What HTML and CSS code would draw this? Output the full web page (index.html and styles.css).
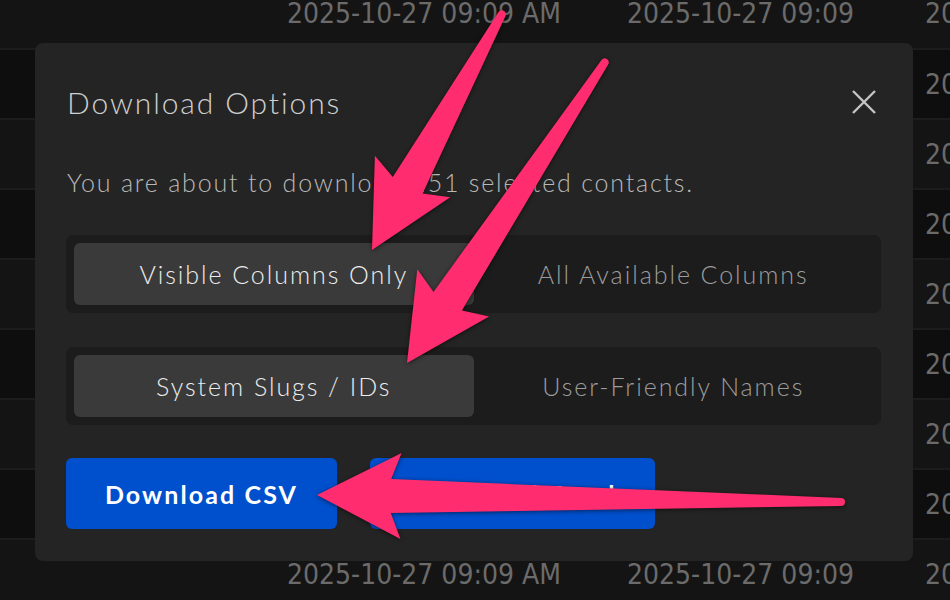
FILE: index.html
```html
<!DOCTYPE html>
<html lang="en">
<head>
    <meta charset="UTF-8">
    <meta name="viewport" content="width=device-width, initial-scale=1.0">
    <title>Contacts - Download</title>
    <link rel="stylesheet" href="styles.css">
</head>
<body>
    <!-- Таблица контактов на фоне -->
    <div class="table">
        <div class="row"><span class="cell c1">2025-10-27 09:09 AM</span><span class="cell c2">2025-10-27 09:09</span><span class="cell c3">2025-10-27</span></div>
        <div class="row dark"><span class="cell c1">2025-10-27 09:09 AM</span><span class="cell c2">2025-10-27 09:09</span><span class="cell c3">2025-10-27</span></div>
        <div class="row"><span class="cell c1">2025-10-27 09:09 AM</span><span class="cell c2">2025-10-27 09:09</span><span class="cell c3">2025-10-27</span></div>
        <div class="row dark"><span class="cell c1">2025-10-27 09:09 AM</span><span class="cell c2">2025-10-27 09:09</span><span class="cell c3">2025-10-27</span></div>
        <div class="row"><span class="cell c1">2025-10-27 09:09 AM</span><span class="cell c2">2025-10-27 09:09</span><span class="cell c3">2025-10-27</span></div>
        <div class="row dark"><span class="cell c1">2025-10-27 09:09 AM</span><span class="cell c2">2025-10-27 09:09</span><span class="cell c3">2025-10-27</span></div>
        <div class="row"><span class="cell c1">2025-10-27 09:09 AM</span><span class="cell c2">2025-10-27 09:09</span><span class="cell c3">2025-10-27</span></div>
        <div class="row dark"><span class="cell c1">2025-10-27 09:09 AM</span><span class="cell c2">2025-10-27 09:09</span><span class="cell c3">2025-10-27</span></div>
        <div class="row"><span class="cell c1">2025-10-27 09:09 AM</span><span class="cell c2">2025-10-27 09:09</span><span class="cell c3">2025-10-27</span></div>
    </div>

    <!-- Модальное окно -->
    <div class="modal">
        <div class="modal-header">
            <h2>Download Options</h2>
            <button class="close-btn" aria-label="Close">
                <svg width="26" height="26" viewBox="0 0 26 26"><path d="M2 2 L24 24 M24 2 L2 24" stroke="#c4c4c4" stroke-width="2.4" fill="none"/></svg>
            </button>
        </div>
        <p class="message">You are about to download 151 selected contacts.</p>
        <div class="segment">
            <button class="seg-btn active">Visible Columns Only</button>
            <button class="seg-btn">All Available Columns</button>
        </div>
        <div class="segment">
            <button class="seg-btn active">System Slugs / IDs</button>
            <button class="seg-btn">User-Friendly Names</button>
        </div>
        <div class="actions">
            <button class="primary csv">Download CSV</button>
            <button class="primary excel">Download Excel</button>
        </div>
    </div>

    <!-- Стрелки-аннотации -->
    <svg class="arrows" width="950" height="600" viewBox="0 0 950 600">
        <path d="M498.5 12.1 L392.8 177 L374.9 155.7 L372 250 L450.2 197.2 L422.6 193.4 L505.5 15.9 A4 4 0 0 0 498.5 12.1 Z"/>
        <path d="M601.7 59.8 L433.5 291.9 L417.3 269.2 L407 363 L489.1 316.5 L461.9 310.5 L608.3 64.2 A4 4 0 0 0 601.7 59.8 Z"/>
        <path d="M841 498 L391.2 479 L401.6 453.1 L317 495 L400.4 539.1 L390.8 513 L841 506 A4 4 0 0 0 841 498 Z"/>
    </svg>
</body>
</html>
```

FILE: styles.css
```css
/* CSS */
body {
    margin: 0;
    background-color: #131313;
    font-family: Lato, "Open Sans", sans-serif;
    overflow: hidden;
}
.table {
    margin-top: -22px;
}
.row {
    height: 70px;
    display: flex;
    align-items: center;
    overflow: hidden;
    background-color: #141414;
    border-top: 2px solid #1c1c1c;
    box-sizing: border-box;
    font-family: "Liberation Sans Narrow", "DejaVu Sans Condensed", sans-serif;
    font-size: 28px;
    color: #6b6b6b;
    white-space: nowrap;
}
.row:first-child {
    border-top: none;
}
.row.dark {
    background-color: #0e0e0e;
}
.cell {
    flex-shrink: 0;
}
.cell.c1 {
    margin-left: 287px;
    width: 340px;
}
.cell.c2 {
    width: 298px;
}
.modal {
    position: absolute;
    left: 35px;
    top: 43px;
    width: 878px;
    height: 518px;
    box-sizing: border-box;
    padding: 39px 32px 32px 31px;
    background-color: #242424;
    border-radius: 8px;
}
.modal-header {
    display: flex;
    align-items: center;
    justify-content: space-between;
    height: 40px;
}
.modal-header h2 {
    margin: 0 0 0 1px;
    font-weight: 300;
    font-size: 30px;
    letter-spacing: 1.9px;
    color: #cfcfcf;
}
.close-btn {
    background: none;
    border: none;
    padding: 0;
    margin-right: 4px;
    width: 26px;
    height: 26px;
    cursor: pointer;
}
.message {
    margin: 40px 0 0 1px;
    line-height: 40px;
    font-size: 25px;
    font-weight: 300;
    letter-spacing: 1.8px;
    color: #b8b8b8;
}
.segment {
    display: grid;
    grid-template-columns: 1fr 1fr;
    padding: 8px;
    margin-top: 33px;
    background-color: #1c1c1c;
    border-radius: 7px;
}
.segment + .segment {
    margin-top: 34px;
}
.seg-btn {
    height: 62px;
    border: none;
    border-radius: 6px;
    background: none;
    font-family: inherit;
    font-size: 25px;
    font-weight: 300;
    letter-spacing: 1.95px;
    color: #9c9c9c;
}
.seg-btn.active {
    background-color: #3a3a3a;
    color: #ececec;
}
.actions {
    display: flex;
    gap: 33px;
    margin-top: 33px;
}
.primary {
    height: 71px;
    border: none;
    border-radius: 6px;
    background-color: #004fcc;
    color: #fff;
    font-family: inherit;
    font-size: 25px;
    font-weight: 700;
    letter-spacing: 2.1px;
}
.primary.csv {
    width: 271px;
}
.primary.excel {
    width: 285px;
}
.arrows {
    position: absolute;
    left: 0;
    top: 0;
    fill: #ff2d6f;
    filter: drop-shadow(0 1px 2px rgba(0, 0, 0, 0.55));
}
```
